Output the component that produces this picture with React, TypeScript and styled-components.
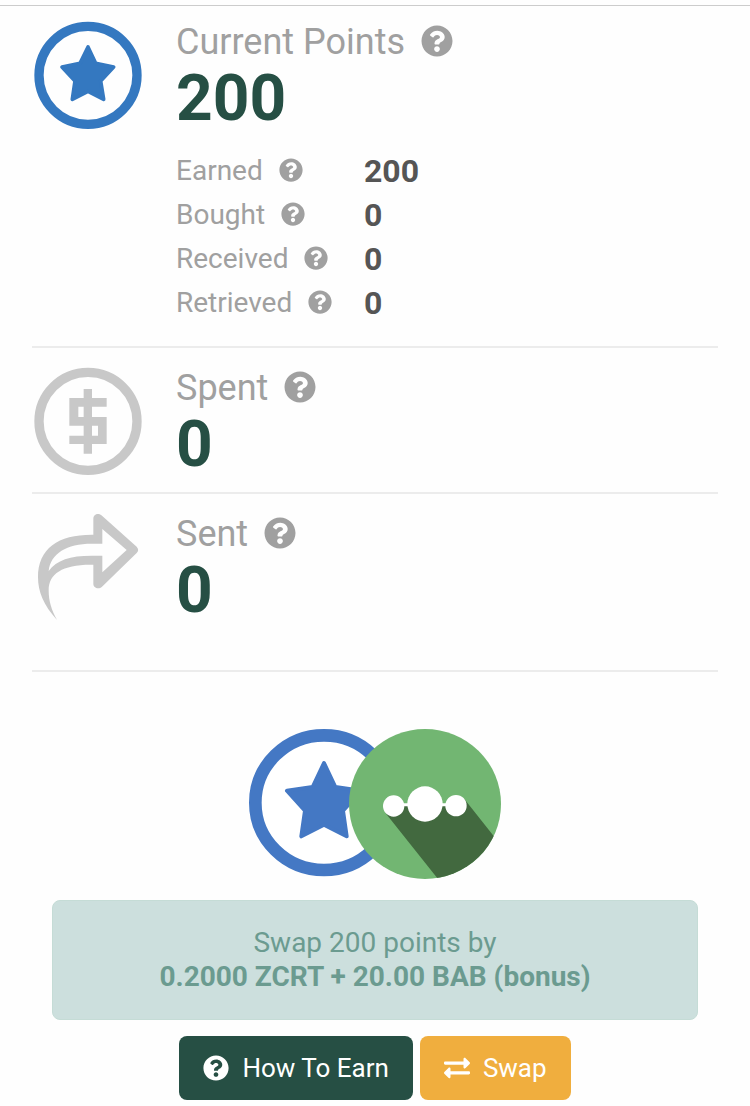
import React from "react";
import styled, { createGlobalStyle } from "styled-components";
import { FaExchangeAlt, FaQuestionCircle } from "react-icons/fa";

const GlobalStyle = createGlobalStyle`
  *, *::before, *::after { box-sizing: border-box; }
  body {
    margin: 0;
    background: #fefefe;
    color: #a0a0a0;
    font-family: Roboto, "Liberation Sans", sans-serif;
    font-size: 28px;
  }
`;

const Page = styled.main`
  margin-top: 5px;
  padding: 0 32px 6px;
  border-top: 1px solid #cccccc;
`;

const Section = styled.section<{ $top?: number; $bottom?: number }>`
  display: flex;
  align-items: flex-start;
  gap: 32px;
  padding: ${(p) => p.$top ?? 16}px 0 ${(p) => p.$bottom ?? 14}px;
  border-bottom: 2px solid #ececec;
`;

const SectionIcon = styled.svg`
  display: block;
  flex: none;
  width: 112px;
  height: 112px;
`;

const Details = styled.div`
  flex: 1;
  min-width: 0;
`;

const Title = styled.h2`
  display: flex;
  align-items: center;
  gap: 16px;
  margin: 0;
  font-size: 36px;
  font-weight: 400;
  line-height: 48px;
`;

const Total = styled.p`
  margin: 0;
  color: #264f44;
  font-size: 64px;
  font-weight: 700;
  line-height: 66px;
`;

const HelpButton = styled.button<{ $size: number }>`
  display: inline-flex;
  flex: none;
  padding: 0 0 2px;
  border: 0;
  background: none;
  color: #a0a0a0;
  font-size: ${(p) => p.$size}px;
  cursor: pointer;
`;

const Breakdown = styled.dl`
  display: grid;
  grid-template-columns: 188px 1fr;
  margin: 17px 0 0;
  line-height: 44px;
`;

const Term = styled.dt`
  display: flex;
  align-items: center;
  gap: 16px;
`;

const Amount = styled.dd`
  margin: 0;
  color: #555555;
  font-size: 32px;
  font-weight: 700;
`;

const SwapArea = styled.section`
  display: flex;
  flex-direction: column;
  align-items: center;
  padding: 57px 20px 0;
`;

const PairLogo = styled.svg`
  display: block;
  width: 252px;
  height: 150px;
`;

const Offer = styled.p`
  width: 100%;
  margin: 21px 0 16px;
  padding: 25px 20px;
  border: 1px solid #c5dcd6;
  border-radius: 8px;
  background: #ccdfdd;
  color: #6b9b90;
  line-height: 34px;
  text-align: center;
`;

const OfferAmount = styled.strong`
  display: block;
  font-weight: 700;
`;

const Actions = styled.div`
  display: flex;
  flex-wrap: wrap;
  justify-content: center;
  gap: 7px;
`;

const ActionButton = styled.button<{ $color: string }>`
  display: inline-flex;
  align-items: center;
  gap: 13px;
  height: 64px;
  padding: 0 24px;
  border: 0;
  border-radius: 8px;
  background: ${(p) => p.$color};
  color: #ffffff;
  font-family: inherit;
  font-size: 26px;
  cursor: pointer;
`;

function Help({ topic, size }: { topic: string; size: number }) {
  return (
    <HelpButton type="button" aria-label={`About ${topic}`} $size={size}>
      <FaQuestionCircle />
    </HelpButton>
  );
}

const StarIcon = () => (
  <SectionIcon viewBox="96 54 336 336" aria-hidden="true">
    <circle cx="264" cy="226" r="147" fill="none" stroke="#3478c0" strokeWidth="28" />
    <path
      d="M264 141 L287 190 L341 201 L302 243 L311 298 L264 274 L217 298 L225 243 L186 201 L240 190 Z"
      fill="#3478c0"
      stroke="#3478c0"
      strokeWidth="11"
      strokeLinejoin="round"
    />
  </SectionIcon>
);

const DollarIcon = () => (
  <SectionIcon viewBox="36 72 336 336" aria-hidden="true">
    <circle cx="204" cy="244" r="147" fill="none" stroke="#c8c8c8" strokeWidth="28" />
    <path
      d="M191 147H216V341H191Z M148 174H260V200H175V231H260V312H148V287H234V257H148Z"
      fill="#c8c8c8"
    />
  </SectionIcon>
);

const ArrowIcon = () => (
  <SectionIcon viewBox="36 60 336 336" aria-hidden="true">
    <path
      fill="#c8c8c8"
      fillRule="evenodd"
      d="M111 390 C70 345 54 305 54 262 C54 175 115 134 215 134 H220 V86 C220 72 236 67 246 77 L350 170 Q359 180 350 189 L246 290 C236 299 220 294 220 281 V224 C130 222 86 250 86 300 C86 335 95 360 111 390 Z
         M247 117 V161 H215 C140 161 92 190 86 243 C110 210 150 197 215 197 H247 V247 L320 180 Z"
    />
  </SectionIcon>
);

const SwapPair = () => (
  <PairLogo viewBox="27 27 756 450" role="img" aria-label="Points to tokens">
    <defs>
      <clipPath id="token">
        <ellipse cx="555" cy="252" rx="228" ry="225" />
      </clipPath>
    </defs>
    <ellipse cx="252" cy="248" rx="206" ry="202" fill="#ffffff" stroke="#4478c4" strokeWidth="38" />
    <path
      d="M252 129 L286 201 L363 212 L309 272 L320 349 L252 314 L184 349 L195 272 L141 212 L218 201 Z"
      fill="#4478c4"
      stroke="#4478c4"
      strokeWidth="12"
      strokeLinejoin="round"
    />
    <ellipse cx="555" cy="252" rx="228" ry="225" fill="#72b672" />
    <path d="M437 280 L598 482 L783 477 L783 376 L673 237 L648 257 L461 257 Z" fill="#42693f" clipPath="url(#token)" />
    <path d="M461 254H648" stroke="#ffffff" strokeWidth="9" />
    <circle cx="461" cy="258" r="32" fill="#ffffff" />
    <circle cx="555" cy="252" r="53" fill="#ffffff" />
    <circle cx="648" cy="257" r="32" fill="#ffffff" />
  </PairLogo>
);

const breakdown = [
  { label: "Earned", value: 200 },
  { label: "Bought", value: 0 },
  { label: "Received", value: 0 },
  { label: "Retrieved", value: 0 },
];

export default function App() {
  return (
    <>
      <GlobalStyle />
      <Page>
        <Section $top={12} $bottom={21}>
          <StarIcon />
          <Details>
            <Title>
              Current Points <Help topic="Current Points" size={32} />
            </Title>
            <Total>200</Total>
            <Breakdown>
              {breakdown.map(({ label, value }) => (
                <React.Fragment key={label}>
                  <Term>
                    {label} <Help topic={label} size={24} />
                  </Term>
                  <Amount>{value}</Amount>
                </React.Fragment>
              ))}
            </Breakdown>
          </Details>
        </Section>
        <Section>
          <DollarIcon />
          <Details>
            <Title>
              Spent <Help topic="Spent" size={32} />
            </Title>
            <Total>0</Total>
          </Details>
        </Section>
        <Section $bottom={46}>
          <ArrowIcon />
          <Details>
            <Title>
              Sent <Help topic="Sent" size={32} />
            </Title>
            <Total>0</Total>
          </Details>
        </Section>
        <SwapArea>
          <SwapPair />
          <Offer>
            Swap 200 points by
            <OfferAmount>0.2000 ZCRT + 20.00 BAB (bonus)</OfferAmount>
          </Offer>
          <Actions>
            <ActionButton type="button" $color="#264f44">
              <FaQuestionCircle /> How To Earn
            </ActionButton>
            <ActionButton type="button" $color="#f0ae3e">
              <FaExchangeAlt /> Swap
            </ActionButton>
          </Actions>
        </SwapArea>
      </Page>
    </>
  );
}
